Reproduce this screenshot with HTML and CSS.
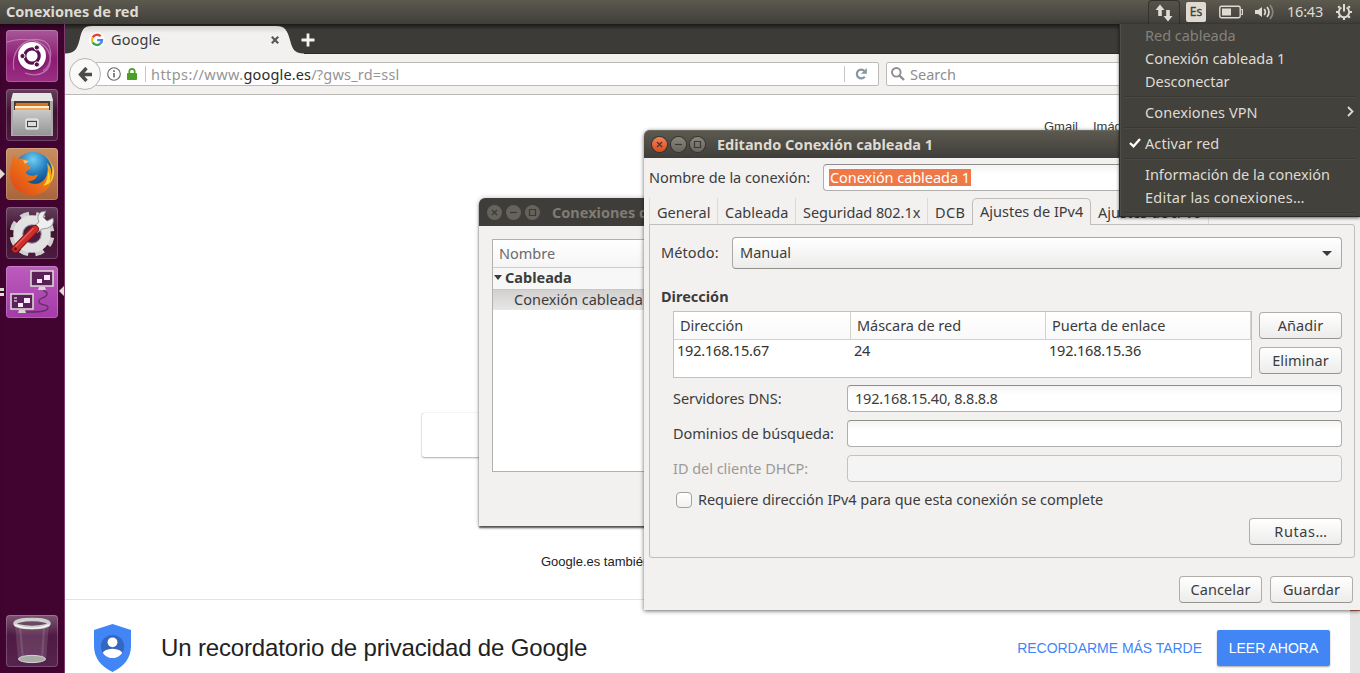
FILE: index.html
```
<!DOCTYPE html>
<html lang="es">
<head>
<meta charset="utf-8">
<title>Conexiones de red</title>
<link rel="stylesheet" href="styles.css">
</head>
<body>
<div class="desktop">
  <header class="panel">
    <span class="panel-title">Conexiones de red</span>
    <div class="indicators">
      <span class="ind-net"><svg width="18" height="18" viewBox="0 0 18 18" fill="#dfdbd2"><path d="M5 .5L9.500 6H6.800V12H3.200V6H.5Z"/><path d="M13 17.500L8.500 12H11.200V6H14.800V12H17.500Z"/></svg></span>
      <span class="ind-lang">Es</span>
      <svg class="ind-bat" width="25" height="14" viewBox="0 0 25 14"><rect x=".8" y="1.3" width="20.4" height="11.4" rx="1.6" fill="none" stroke="#dfdbd2" stroke-width="1.4"/><rect x="3" y="3.5" width="9" height="7" fill="#dfdbd2"/><path d="M22.2 4.5h1.2v5h-1.2" fill="none" stroke="#dfdbd2" stroke-width="1.2"/></svg>
      <svg class="ind-vol" width="21" height="18" viewBox="0 0 21 18"><path d="M1 7h3l4-3v10l-4-3H1z" fill="#dfdbd2"/><g fill="none" stroke="#dfdbd2" stroke-width="1.7"><path d="M10.2 6q2.3 3 0 6"/><path d="M13 4q4 5 0 10"/><path d="M16 2q5.600 7 0 14" stroke="#8a877f"/></g></svg>
      <span class="ind-time">16:43</span>
      <svg class="ind-gear" width="18" height="18" viewBox="0 0 18 18" fill="none" stroke="#dfdbd2"><path d="M6.400 4.500A5.200 5.200 0 1 0 11.600 4.500" stroke-width="1.900"/><path d="M9 1v7.500" stroke-width="2"/><path d="M1 9h3M14 9h3M3.200 14.800l2-2M14.800 14.800l-2-2M9 14v3M3.200 3.200l1.500 1.500M14.800 3.200l-1.500 1.500" stroke-width="2.200"/></svg>
    </div>
  </header>

  <div class="workspace">
    <nav class="launcher">
      <div class="tile tile-dash"><svg width="52" height="52" viewBox="0 0 52 52"><g fill="none" stroke="#d9a3cc" stroke-width="1.200" opacity=".6"><path d="M8 40C4 18 22 5 38 11c10 6 8 24-1 30"/><path d="M1 12c18-6 40-2 43 14S32 48 19 43"/></g><circle cx="26" cy="27" r="14.500" fill="#5e124f" opacity=".5"/><circle cx="26" cy="26" r="14" fill="#fff"/><circle cx="26" cy="26" r="7.200" fill="none" stroke="#5a1152" stroke-width="3.200"/><g fill="#5a1152" stroke="#fff" stroke-width="1"><circle cx="16.500" cy="26" r="2.600"/><circle cx="30.800" cy="17.500" r="2.600"/><circle cx="30.800" cy="34.500" r="2.600"/></g></svg></div>
      <div class="tile tile-dark"><svg width="52" height="52" viewBox="0 0 52 52"><defs><linearGradient id="cab" x2="0" y2="1"><stop stop-color="#c9c9c9"/><stop offset="1" stop-color="#969696"/></linearGradient></defs><path d="M7 4h38l2 7v36H5V11z" fill="#a9a9a9"/><path d="M7 4h38l2 8H5z" fill="#e6e6e6"/><path d="M8 12h36v12H8z" fill="#493a30"/><path d="M10 14h32v8H9z" fill="#d9702b"/><path d="M9 17h34v2H9z" fill="#fff0c9"/><path d="M9 19h34v3H9z" fill="#f0a860"/><path d="M7 21h38v25H7z" fill="url(#cab)"/><rect x="20" y="30" width="12" height="10" rx="2" fill="#c4c4c4" stroke="#f4f4f4" stroke-width="1.200"/><rect x="21.500" y="32.500" width="9" height="5" fill="#ddd" stroke="#444" stroke-width="1"/></svg></div>
      <div class="tile tile-fox"><svg width="52" height="52" viewBox="0 0 52 52"><defs><radialGradient id="globe" cx=".5" cy=".2" r=".8"><stop stop-color="#6fd0f2"/><stop offset=".5" stop-color="#1f74b8"/><stop offset="1" stop-color="#0c2f66"/></radialGradient><linearGradient id="fur" x1="0" y1="1" x2="1" y2="0"><stop stop-color="#dc4215"/><stop offset=".6" stop-color="#ef7a1a"/><stop offset="1" stop-color="#ffe62e"/></linearGradient></defs><circle cx="27" cy="23" r="19" fill="url(#globe)"/><path d="M8 7c1 3 3 4 5 4 3-1 7 0 9 2l-2 2c0 2 3 3 5 4-1 3-5 3-5 6 2 3 8 4 12 1-2 6-7 8-11 7 8 6 18 2 20-7 1-3 1-7 0-11 3 3 5 7 4 12 2-3 2-7 2-10 1 3 1 7 0 9C46 40 38 47 26 47 13 47 4 38 4 26 4 18 6 14 8 7z" fill="url(#fur)"/><path d="M39 8c8 7 10 17 5 26 0-6 0-8-2-11 0 6-1 11-5 15 8-2 11-7 11-14-1-7-4-12-9-16z" fill="#ffd927"/><path d="M17 12l6 1-4 3z" fill="#f6c39a"/></svg></div>
      <div class="tile tile-dark"><svg width="52" height="52" viewBox="0 0 52 52"><circle cx="26" cy="27" r="19.500" fill="none" stroke="#cfcfcf" stroke-width="6" stroke-dasharray="8.500 6.816" transform="rotate(10 26 27)"/><circle cx="26" cy="27" r="14" fill="none" stroke="#e2e2e2" stroke-width="9.500"/><circle cx="26" cy="27" r="9.300" fill="#4d1c45" stroke="#a9a9a9"/><path d="M27 20L33 15q-3-6 2-10l5-1-3 6 4 4 6-3q2 7-5 10l-6 1-5 4z" fill="#eee" stroke="#888" stroke-width=".8"/><path d="M9.500 42L29 22" stroke="#8c1414" stroke-width="8" stroke-linecap="round"/><path d="M9.500 42L29 22" stroke="#cf2f2b" stroke-width="6" stroke-linecap="round"/><path d="M10 39L27 21.500" stroke="#e0645b" stroke-width="1.300" stroke-linecap="round"/><circle cx="9.500" cy="42" r="1.400" fill="#571010"/></svg></div>
      <div class="tile tile-net"><svg width="52" height="52" viewBox="0 0 52 52"><path d="M37 24c3 2 6 3 3 6s-8 2-7 6 10 2 9 6-10 4-24 4" fill="none" stroke="#5d3263" stroke-width="1.300"/><g stroke="#d8d8d0" stroke-width="1.600" fill="#5c2059"><rect x="25" y="5" width="22" height="15"/><rect x="5" y="28" width="22" height="15"/></g><path d="M33 21h6l1 3h-8zM13 44h6l1 3h-8z" fill="#d8d8d0"/><path d="M38 9h6v5h-6zM31 13h5v4h-5zM18 32h6v5h-6zM12 37h5v4h-5z" fill="#ffe8ff"/><path d="M8 31h3v2H8zM8 34h3v2H8z" fill="#ba90b8"/></svg></div>
      <div class="tile tile-dark tile-trash"><svg width="52" height="52" viewBox="0 0 52 52"><path d="M9 9l3 36q14 6 28 0l3-36z" fill="#fff" opacity=".13"/><path d="M14 12l3 32M38 12l-2 33" stroke="#fff" opacity=".12" stroke-width="2"/><ellipse cx="26" cy="44" rx="13.500" ry="3.600" fill="#a8aba5" stroke="#d5d5cf"/><ellipse cx="26" cy="8.500" rx="17" ry="4" fill="#6a4966" stroke="#cfd0cb" stroke-width="3.500"/><path d="M8.500 10q17.500 7 35 0" fill="none" stroke="#f4f4f0" stroke-width="1.500"/></svg></div>
      <i class="mark mark-fox"></i><i class="mark mark-net-a"></i><i class="mark mark-net-b"></i><i class="mark mark-focus"></i>
    </nav>

    <main class="browser">
      <div class="tabbar">
        <svg class="tab-shape" width="240" height="30" viewBox="0 0 240 30"><defs><linearGradient id="tabg" x2="0" y2="1"><stop stop-color="#d3d2cf"/><stop offset=".25" stop-color="#f2f1f0"/></linearGradient></defs><path d="M0 30V29.500C9 29.500 12 26 14.500 16C17 6 18 2 27 2H211C220 2 222 6 225 16C227.500 26 230 29.500 239 29.500V30Z" fill="url(#tabg)"/></svg>
        <div class="tab">
          <svg width="16" height="16" viewBox="0 0 16 16"><circle cx="8" cy="8" r="7.700" fill="#fff"/><g fill="none" stroke-width="2.300"><path d="M11.700 4.300A5 5 0 0 0 3.600 5.600" stroke="#ea4335"/><path d="M3.600 5.600A5 5 0 0 0 3.600 10.400" stroke="#fbbc05"/><path d="M3.600 10.400A5 5 0 0 0 11.300 11.700" stroke="#34a853"/><path d="M11.300 11.700A5 5 0 0 0 13 8.100H8.200" stroke="#4285f4"/></g></svg>
          <span class="tab-title">Google</span>
          <svg class="tab-close" width="8" height="8" viewBox="0 0 8 8"><path d="M.8.8l6.400 6.400M7.200.8L.8 7.200" stroke="#555" stroke-width="2.100"/></svg>
        </div>
        <svg class="tab-new" width="14" height="14" viewBox="0 0 14 14"><path d="M7 .5v13M.5 7h13" stroke="#f4f3f1" stroke-width="2.800"/></svg>
      </div>
      <div class="toolbar">
        <span class="back"><svg width="14" height="15" viewBox="0 0 14 15" fill="none" stroke="#4c4c4c" stroke-width="3.400"><path d="M8.500 1L2.500 7.500l6 6.500M3 7.500h11"/></svg></span>
        <div class="urlbar">
          <svg width="14" height="14" viewBox="0 0 14 14"><circle cx="7" cy="7" r="6.300" fill="none" stroke="#666" stroke-width="1.100"/><path d="M7 6v4.500M7 3.300v1.600" stroke="#666" stroke-width="1.600"/></svg>
          <svg class="lock" width="10" height="12" viewBox="0 0 10 12"><path d="M2.300 6V3.600a2.700 2.700 0 0 1 5.400 0V6" fill="none" stroke="#4a9f24" stroke-width="1.700"/><rect y="5" width="10" height="7" rx=".8" fill="#4a9f24"/></svg>
          <span class="vline"></span>
          <span class="url"><span>https://www.</span><b>google.es</b><em>/?gws_rd=ssl</em></span>
          <span class="vline reload-line"></span>
          <svg class="reload" width="13" height="12" viewBox="0 0 13 12"><path d="M9.800 8.600A4.400 4.400 0 1 1 9.300 2.800" fill="none" stroke="#8797a1" stroke-width="2.200"/><path d="M11.800 0v5.800H6z" fill="#8797a1"/></svg>
        </div>
        <div class="search">
          <svg width="14" height="14" viewBox="0 0 14 14" fill="none" stroke="#8e8e8e"><circle cx="5.300" cy="5.300" r="4.300" stroke-width="1.900"/><path d="M8.300 8.300l4.700 4.700" stroke-width="2.400"/></svg>
          <span>Search</span>
        </div>
      </div>
      <section class="page">
        <div class="page-links"><span>Gmail</span><span>Imágenes</span></div>
        <div class="page-box"></div>
        <div class="page-langs">Google.es también</div>
        <div class="privacy">
          <svg width="38" height="48" viewBox="0 0 38 48"><defs><clipPath id="pc"><circle cx="18.500" cy="22.500" r="11.600"/></clipPath></defs><path d="M18.500 0L37 6v16c0 12-7 20.500-18.500 26C7 42.500 0 34 0 22V6z" fill="#4285f4"/><circle cx="18.500" cy="22.500" r="11.600" fill="#3367c0"/><g clip-path="url(#pc)" fill="#fff"><circle cx="18.500" cy="18.300" r="4.900"/><ellipse cx="18.500" cy="30" rx="10" ry="5.300"/></g></svg>
          <span class="privacy-title">Un recordatorio de privacidad de Google</span>
          <span class="later">RECORDARME MÁS TARDE</span>
          <span class="read">LEER AHORA</span>
        </div>
        <div class="scrolltrack"></div>
      </section>
    </main>
  </div>

  <section class="window list-window">
    <div class="titlebar inactive">
      <i class="wbtn"><svg viewBox="0 0 15 15"><path d="M5 5l5 5M10 5l-5 5"/></svg></i><i class="wbtn"><svg viewBox="0 0 15 15"><path d="M4 7.500h7"/></svg></i><i class="wbtn"><svg viewBox="0 0 15 15"><path d="M4.500 4.500h6v6h-6z"/></svg></i>
      <span>Conexiones de red</span>
    </div>
    <div class="tree">
      <div class="tree-head">Nombre</div>
      <div class="tree-group"><i class="arrow"></i>Cableada</div>
      <div class="tree-item">Conexión cableada 1</div>
    </div>
  </section>

  <section class="window edit-window">
    <div class="titlebar">
      <i class="wbtn close"><svg viewBox="0 0 15 15"><path d="M5 5l5 5M10 5l-5 5"/></svg></i><i class="wbtn"><svg viewBox="0 0 15 15"><path d="M4 7.500h7"/></svg></i><i class="wbtn"><svg viewBox="0 0 15 15"><path d="M4.500 4.500h6v6h-6z"/></svg></i>
      <span>Editando Conexión cableada 1</span>
    </div>
    <div class="name-row"><label>Nombre de la conexión:</label><div class="entry"><mark>Conexión cableada 1</mark></div></div>
    <div class="tabs">
      <span class="t1">General</span><span class="t2">Cableada</span><span class="t3">Seguridad 802.1x</span><span class="t4">DCB</span><span class="t5 active">Ajustes de IPv4</span><span class="t6">Ajustes de IPv6</span>
    </div>
    <div class="sheet">
      <div class="method"><label>Método:</label><div class="combo"><span>Manual</span><i class="arrow"></i></div></div>
      <h2>Dirección</h2>
      <div class="addresses">
        <div class="grid">
          <div class="cells head"><span>Dirección</span><span>Máscara de red</span><span>Puerta de enlace</span></div>
          <div class="cells row"><span>192.168.15.67</span><span>24</span><span>192.168.15.36</span></div>
        </div>
        <div class="side"><span class="btn">Añadir</span><span class="btn">Eliminar</span></div>
      </div>
      <div class="form">
        <label>Servidores DNS:</label><div class="entry num">192.168.15.40, 8.8.8.8</div>
        <label>Dominios de búsqueda:</label><div class="entry"></div>
        <label class="off">ID del cliente DHCP:</label><div class="entry disabled"></div>
      </div>
      <div class="require"><i class="check"></i><span>Requiere dirección IPv4 para que esta conexión se complete</span></div>
      <div class="routes"><span class="btn">Rutas…</span></div>
    </div>
    <div class="actions"><span class="btn">Cancelar</span><span class="btn">Guardar</span></div>
  </section>

  <aside class="menu">
    <div class="mi dim">Red cableada</div>
    <div class="mi">Conexión cableada 1</div>
    <div class="mi">Desconectar</div>
    <hr>
    <div class="mi wide">Conexiones VPN<svg class="sub" width="7" height="11" viewBox="0 0 7 11"><path d="M1 1l4.500 4.500L1 10" fill="none" stroke="#dfdbd2" stroke-width="1.800"/></svg></div>
    <hr>
    <div class="mi wide"><svg class="tick" width="12" height="10" viewBox="0 0 12 10"><path d="M1 5l3.500 3.300L11 1" fill="none" stroke="#fff" stroke-width="2.300"/></svg>Activar red</div>
    <hr>
    <div class="mi">Información de la conexión</div>
    <div class="mi dots">Editar las conexiones…</div>
    <hr>
  </aside>
</div>
</body>
</html>
```
FILE: styles.css
```
* { box-sizing: border-box; }
body { margin: 0; font: 14.5px/20px "Noto Sans", sans-serif; color: #3c3c3c; }
svg { flex: none; display: block; }
.desktop { position: relative; width: 1360px; height: 673px; overflow: hidden; background: #fff; display: flex; flex-direction: column; white-space: nowrap; }

.panel { flex: none; height: 24px; display: flex; justify-content: space-between; align-items: center; padding-left: 6px; background: linear-gradient(#5c594f, #3f3e39); color: #dfdbd2; }
.panel-title { font-weight: bold; padding-bottom: 2px; }
.indicators { display: flex; align-items: center; height: 24px; width: 212px; }
.ind-net { width: 32px; height: 24px; display: flex; align-items: center; justify-content: center; border: 1px solid #33322e; border-bottom: 0; border-radius: 4px 4px 0 0; background: linear-gradient(#54524a, #42413c); }
.ind-lang { margin-left: 6px; width: 20px; height: 20px; border-radius: 2px; background: #dfdbd2; color: #45443e; text-align: center; font-size: 12px; -webkit-text-stroke: .35px #45443e; }
.ind-bat { margin-left: 13px; }
.ind-vol { margin-left: 10px; }
.ind-time { margin-left: 12px; width: 38px; letter-spacing: -.2px; padding-bottom: 2px; }
.ind-gear { margin-left: 10px; }

.workspace { flex: 1; display: flex; min-height: 0; }
.launcher { position: relative; width: 65px; flex: none; display: flex; flex-direction: column; gap: 7px; padding: 6px; background: #410430; border-right: 1px solid #7c3b6e; box-shadow: inset 0 6px 5px -4px #1c0215; }
.tile { width: 52px; height: 52px; flex: none; border-radius: 4px; overflow: hidden; box-shadow: inset 0 0 0 1px rgba(255,255,255,.2); }
.tile-dash { background: linear-gradient(#a85898, #8c1c72 55%, #9a3085); }
.tile-dark { background: linear-gradient(#66405e, #40112f 45%, #4d1b41); }
.tile-fox { background: linear-gradient(#c98e60, #a8653b); }
.tile-net { background: linear-gradient(#bc5dbd, #a43aa8); }
.tile-trash { margin-top: auto; background: linear-gradient(#7b5672, #4f1a44 40%, #572450); }
.mark { position: absolute; }
.mark-fox { left: 0; top: 145px; border: 5px solid transparent; border-left-color: #dfdbd2; border-right: 0; }
.mark-net-a, .mark-net-b { left: 0; width: 4px; height: 3px; background: #dfdbd2; }
.mark-net-a { top: 264px; }
.mark-net-b { top: 269px; }
.mark-focus { right: 0; top: 262px; border: 5px solid transparent; border-right-color: #dfdbd2; border-left: 0; }

.browser { flex: 1; display: flex; flex-direction: column; min-width: 0; background: #fff; }
.tabbar { position: relative; height: 30px; flex: none; display: flex; align-items: center; background: linear-gradient(#1c1b19, #3c3b37 6px); border-bottom: 1px solid #2b2a27; }
.tab-shape { position: absolute; left: 0; top: 0; }
.tab { position: relative; width: 226px; display: flex; align-items: center; padding: 3px 12px 0 24px; }
.tab-title { margin-left: 6px; letter-spacing: .1px; padding-bottom: 2px; }
.tab-close { margin-left: auto; }
.tab-new { margin: 3px 0 0 10px; }
.toolbar { height: 41px; flex: none; display: flex; align-items: center; background: #f2f1f0; border-bottom: 1px solid #bcbab7; padding-left: 4px; }
.back { position: relative; width: 32px; height: 32px; border: 1px solid #b6b4b1; border-radius: 50%; background: #f9f9f8; display: flex; align-items: center; justify-content: center; padding-right: 1px; }
.urlbar { margin-left: -6px; width: 784px; height: 24px; background: #fff; border: 1px solid #bdbbb8; border-radius: 2px; display: flex; align-items: center; padding-left: 11px; color: #959595; }
.lock { margin-left: 6px; }
.vline { width: 1px; height: 16px; background: #c6c6c6; margin-left: 8px; }
.url { margin-left: 5px; letter-spacing: .42px; }
.url b { font-weight: normal; color: #2b2b2b; letter-spacing: .15px; }
.url em { font-style: normal; letter-spacing: .2px; }
.reload-line { margin-left: auto; }
.reload { margin: 0 10px 0 10px; }
.search { margin-left: 7px; flex: 1; height: 24px; background: #fff; border: 1px solid #bdbbb8; border-radius: 2px; display: flex; align-items: center; gap: 5px; padding-left: 4px; color: #8e8e8e; }

.page { position: relative; flex: 1; display: flex; flex-direction: column; font: 13px/16px "Liberation Sans", Arial, sans-serif; color: #222; }
.page-links { height: 318px; padding: 24px 0 0 979px; display: flex; gap: 15px; color: #404040; overflow: hidden; }
.page-box { margin-left: 357px; width: 300px; height: 44px; flex: none; border-radius: 2px; box-shadow: 0 0 1px rgba(0,0,0,.3), 0 1px 2px rgba(0,0,0,.3); }
.page-langs { padding: 97px 0 0 476px; height: 142px; flex: none; }
.privacy { border-top: 1px solid #e3e3e3; flex: 1; display: flex; align-items: center; padding: 22px 30px 0 29px; }
.privacy svg { margin-bottom: -1px; }
.privacy-title { margin-left: 29px; font-size: 24px; letter-spacing: -.155px; }
.later { margin-left: auto; font-size: 14px; letter-spacing: -.03px; color: #4285f4; }
.read { margin-left: 15px; width: 113px; height: 36px; line-height: 36px; text-align: center; background: #4285f4; color: #fff; border-radius: 2px; font-size: 14px; box-shadow: 0 1px 2px rgba(0,0,0,.35); }
.scrolltrack { position: absolute; right: 0; top: 0; bottom: 0; width: 10px; background: #e5e5e5; border-top: 516px solid #c2694a; }

.window { position: absolute; background: #f2f1f0; border-radius: 6px 6px 0 0; }
.list-window { left: 479px; top: 198px; width: 400px; height: 328px; box-shadow: 0 2px 2px rgba(0,0,0,.65), 0 0 5px rgba(0,0,0,.25); }
.edit-window { left: 644px; top: 130px; width: 716px; height: 480px; border-top-right-radius: 0; box-shadow: 0 1px 4px rgba(0,0,0,.6); display: flex; flex-direction: column; }
.titlebar { height: 28px; flex: none; border-radius: 6px 6px 0 0; background: linear-gradient(#5d5a51, #3f3e39); color: #dfdbd2; font-weight: bold; display: flex; align-items: center; gap: 4px; padding-left: 8px; box-shadow: inset 0 1px #6b685e; }
.titlebar span { margin-left: 8px; padding-bottom: 1px; }
.titlebar.inactive { background: #3e3d39; color: #7f7c74; box-shadow: none; }
.wbtn { width: 15px; height: 15px; border-radius: 50%; background: linear-gradient(#89867e, #69665f); box-shadow: 0 0 0 1px #363530; }
.wbtn svg { fill: none; stroke: #3a3935; stroke-width: 1.2; }
.wbtn.close { background: linear-gradient(#f4805a, #dd4b1b); }
.inactive .wbtn { background: #66635c; box-shadow: none; }

.tree { margin: 13px 13px 0; height: 233px; background: #fff; border: 1px solid #b4b1ad; }
.tree-head { height: 28px; padding: 3px 6px 0; color: #6b6b6b; background: linear-gradient(#fff, #f5f5f5); border-bottom: 1px solid #cfcdca; }
.tree-group { height: 21px; line-height: 19px; display: flex; align-items: center; font-weight: bold; padding: 0 0 2px 1px; gap: 3px; background: #f7f7f7; }
.tree-item { height: 21px; line-height: 19px; padding-left: 21px; background: linear-gradient(#d3d1cf, #e8e6e5); border-top: 1px solid #cac8c5; }
.arrow { border: 4px solid transparent; border-top: 5px solid #3c3c3c; border-bottom: 0; }

.entry { height: 27px; border: 1px solid #b1aeab; border-top-color: #8f8d8a; border-radius: 4px; background: linear-gradient(#f4f4f4, #fff 9px); padding: 2px 7px; }
.num { letter-spacing: -.2px; }
.disabled { background: #f5f4f4; border-color: #c4c2bf; }
.name-row { display: flex; align-items: center; padding: 6px 0 0 5px; }
.name-row label { width: 174px; padding-bottom: 2px; letter-spacing: -.04px; }
.name-row .entry { flex: 1; border-right: 0; border-radius: 4px 0 0 4px; padding: 4px 6px 0; line-height: 17px; }
mark { display: inline-block; height: 17px; background: #f07746; color: #fff; padding: 0 1px; margin-left: -1px; letter-spacing: -.05px; }
.tabs { position: relative; display: flex; height: 34px; padding: 7px 0 0 5px; margin-bottom: -1px; }
.tabs span { height: 26px; padding: 4px 0 0 7px; border-left: 1px solid #dcdad8; }
.tabs .t1 { width: 68px; }
.tabs .t2 { width: 78px; }
.tabs .t3 { width: 132px; letter-spacing: -.06px; }
.tabs .t4 { width: 45px; letter-spacing: .4px; }
.tabs .t5 { width: 119px; height: 27px; padding-top: 2px; border: 1px solid #bfbdba; border-bottom: 0; border-radius: 5px 5px 0 0; background: #f2f1f0; }
.tabs .t6 { width: 118px; border-left: 0; border-right: 1px solid #dcdad8; }
.sheet { margin: 0 5px; height: 334px; border: 1px solid #c0bebb; border-radius: 0 3px 3px 3px; display: flex; flex-direction: column; padding: 12px 12px 0 11px; }
.method { display: flex; align-items: center; }
.method label { width: 71px; letter-spacing: .1px; padding-bottom: 2px; }
.combo { flex: 1; height: 32px; border: 1px solid #aba8a5; border-bottom-color: #92908d; border-radius: 4px; background: linear-gradient(#fff, #ececeb); display: flex; align-items: center; justify-content: space-between; padding: 0 9px 0 7px; }
.combo span { padding-bottom: 2px; }
.combo .arrow { border-left-width: 5px; border-right-width: 5px; }
.sheet h2 { font-size: 14.5px; line-height: 20px; margin: 17px 0 1px; }
.addresses { display: flex; gap: 7px; padding: 4px 0 0 12px; }
.grid { width: 579px; height: 67px; background: #fff; border: 1px solid #c3c1be; }
.cells { display: grid; grid-template-columns: 177px 195px 1fr; }
.head { height: 28px; background: linear-gradient(#fff, #f9f9f9); border-bottom: 1px solid #d4d2cf; }
.head span { padding: 3px 0 0 6px; border-right: 1px solid #d4d2cf; letter-spacing: -.04px; }
.row { height: 22px; letter-spacing: -.2px; color: #333; }
.row span { padding: 0 0 0 3px; }
.side { display: flex; flex-direction: column; gap: 8px; padding-top: 1px; }
.btn { width: 83px; height: 27px; border: 1px solid #b0adaa; border-bottom-color: #979592; border-radius: 4px; background: linear-gradient(#fff, #ececeb); text-align: center; line-height: 25px; letter-spacing: .1px; }
.form { display: grid; grid-template-columns: 174px 1fr; row-gap: 8px; align-items: center; padding: 7px 0 0 12px; }
.form label { padding-bottom: 2px; letter-spacing: -.03px; }
.form .off { color: #9c9a98; }
.require { display: flex; gap: 6px; align-items: center; height: 28px; padding: 8px 0 0 15px; letter-spacing: -.05px; }
.require span { padding-bottom: 2px; }
.check { width: 16px; height: 16px; border: 1px solid #a3a09d; border-radius: 4px; background: linear-gradient(#fff, #f1f1f1); }
.routes { display: flex; justify-content: flex-end; padding-top: 8px; }
.routes .btn { width: 93px; padding-left: 11px; letter-spacing: .6px; }
.actions { display: flex; justify-content: flex-end; gap: 8px; padding: 18px 7px 0 0; }

.menu { position: absolute; left: 1119px; top: 24px; width: 241px; height: 193px; background: #42413c; border-left: 1px solid #2c2b28; border-bottom: 1px solid #2c2b28; box-shadow: 0 1px 3px rgba(0,0,0,.6), inset 1px 0 #504e48; color: #dfdbd2; padding-top: 1px; }
.mi { position: relative; height: 23px; line-height: 20px; padding-left: 25px; letter-spacing: -.03px; }
.wide { letter-spacing: .1px; }
.dots { letter-spacing: .22px; }
.dim { color: #85827a; }
.menu hr { height: 8px; margin: 0 4px; border: 0; background: linear-gradient(#393833, #393833) 0 2px / 100% 1px no-repeat, linear-gradient(#4a4842, #4a4842) 0 3px / 100% 1px no-repeat; }
.sub { position: absolute; right: 6px; top: 4px; }
.tick { position: absolute; left: 9px; top: 5px; }
```
